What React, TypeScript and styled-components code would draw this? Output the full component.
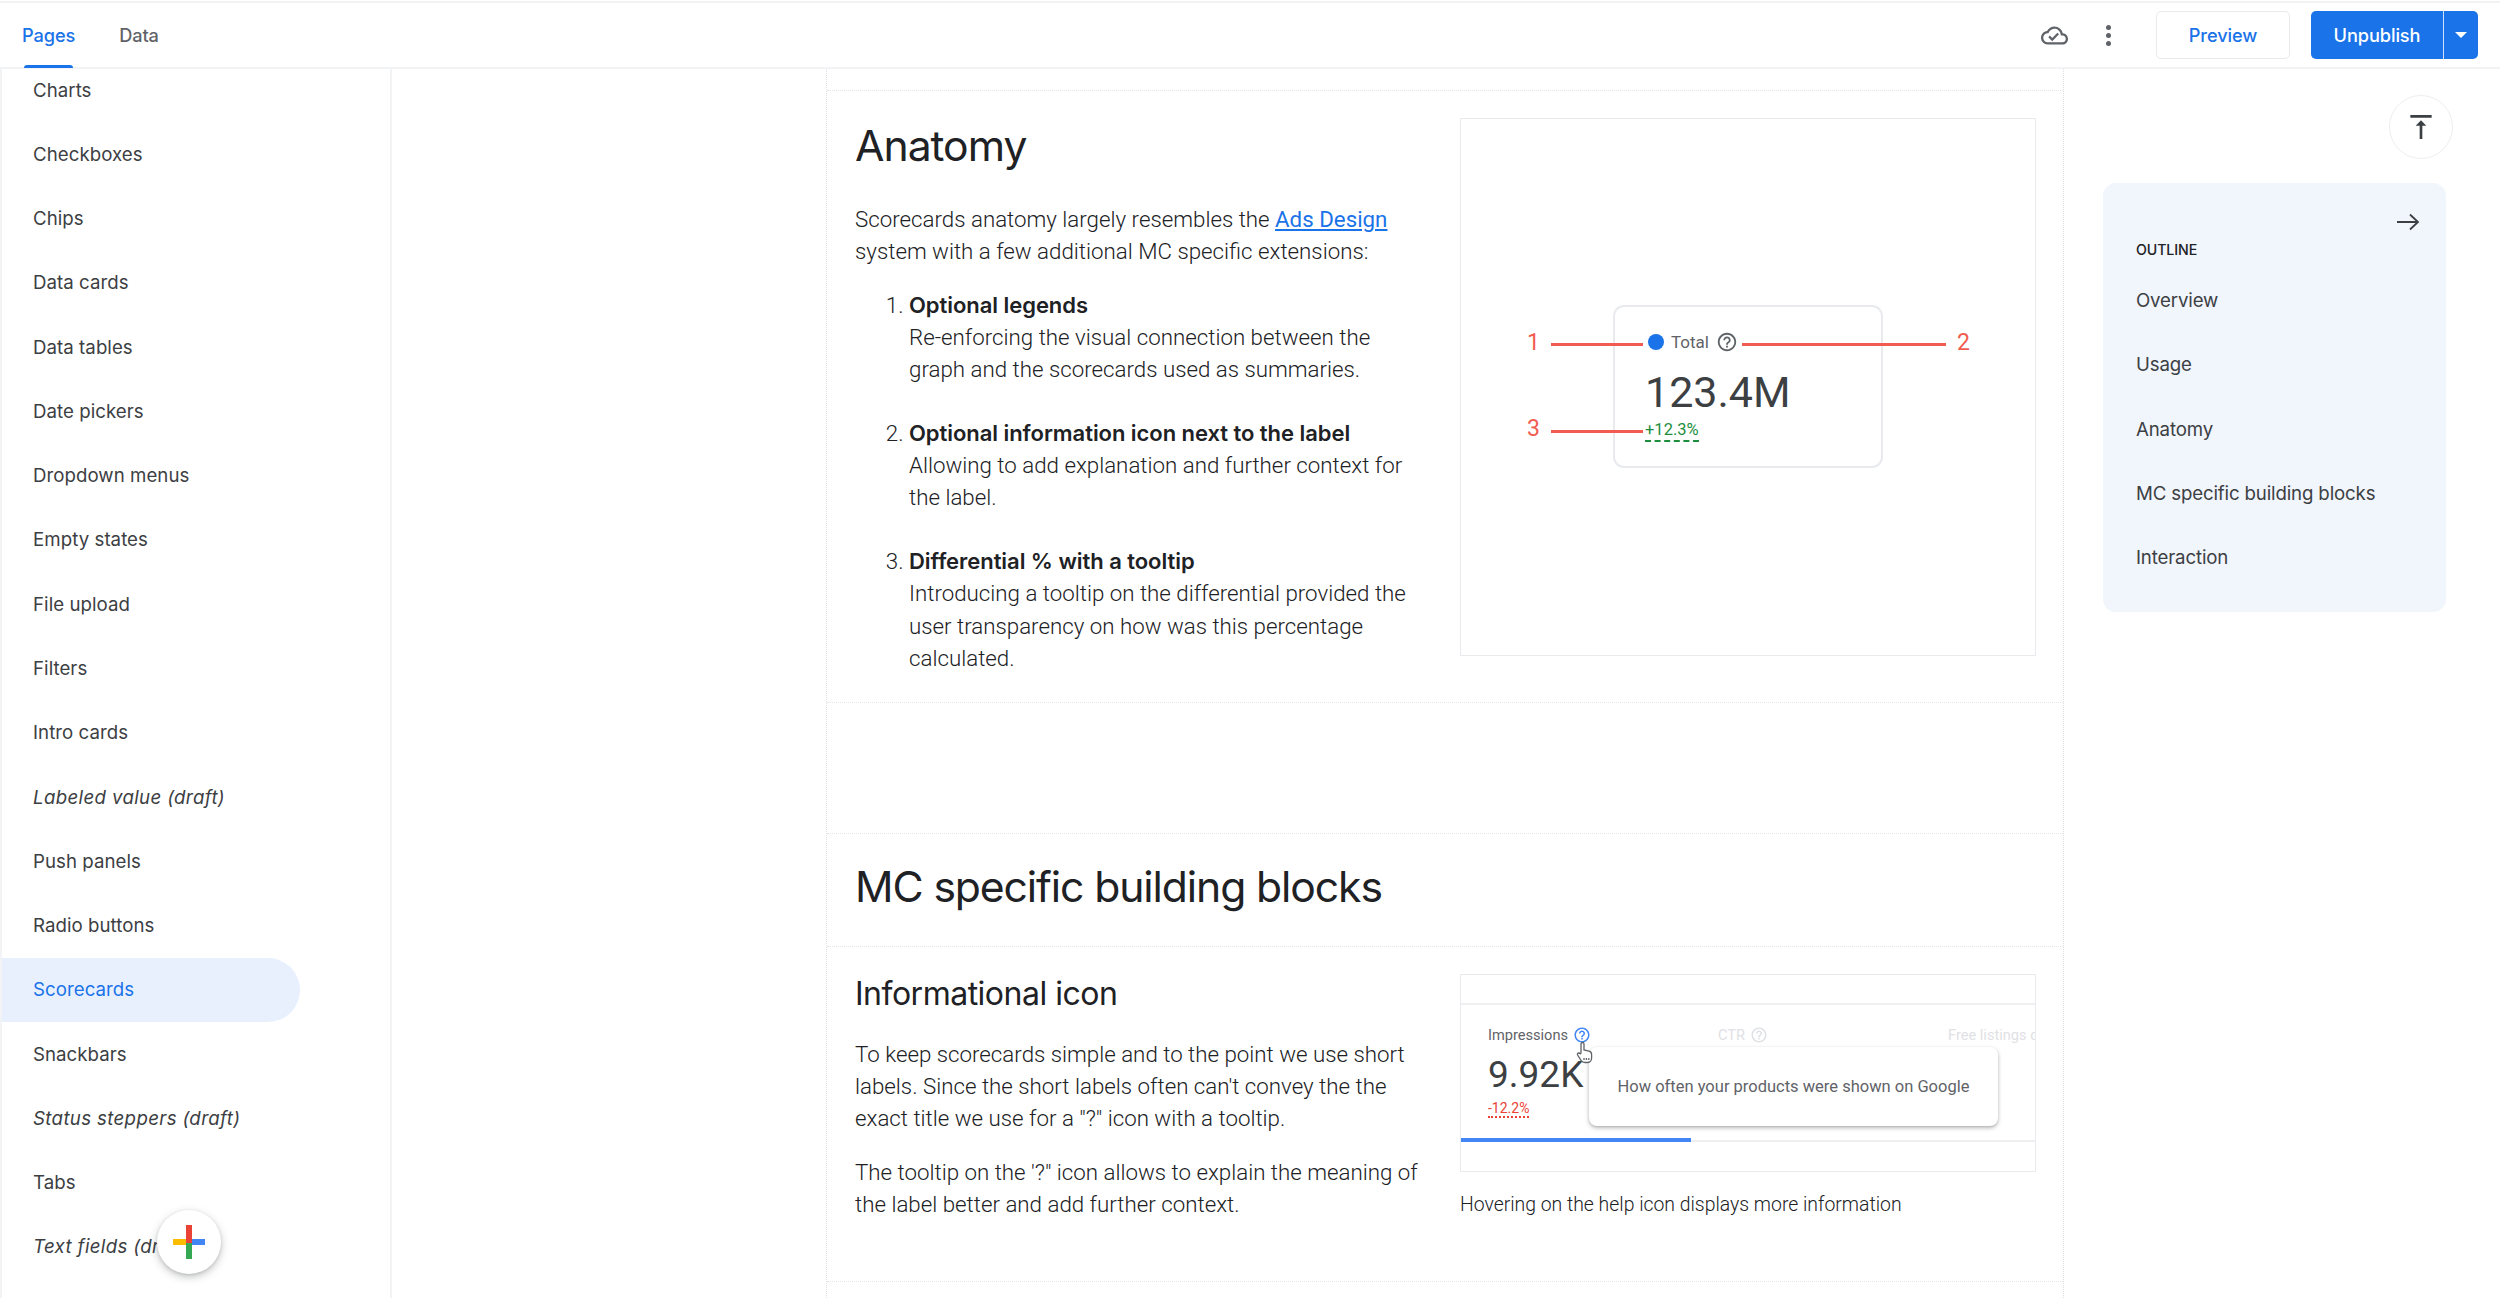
import React from "react";
import styled, { createGlobalStyle } from "styled-components";

const SANS = `"Inter", "Open Sans", sans-serif`;
const BODY = `"Roboto", "Liberation Sans", sans-serif`;

const Global = createGlobalStyle`
  html, body { margin: 0; padding: 0; height: 1298px; overflow: hidden; background: #fff; }
  * { box-sizing: border-box; }
`;

const Page = styled.div`
  height: 1298px;
  display: flex;
  flex-direction: column;
  overflow: hidden;
  background: #fff;
  font-family: ${BODY};
`;

const TopBar = styled.header`
  flex: none;
  height: 67.5px;
  padding-top: 1px;
  display: flex;
  align-items: center;
  border-top: 2px solid #f1f3f4;
  border-bottom: 2px solid #f1f3f4;
  margin-top: 1px;
`;

const Tabs = styled.nav`
  display: flex;
  gap: 44px;
  padding-left: 22px;
  height: 100%;
`;

const Tab = styled.a<{ $active?: boolean }>`
  position: relative;
  display: flex;
  align-items: center;
  font: 500 18.2px ${SANS};
  letter-spacing: -0.1px;
  color: ${(p) => (p.$active ? "#1a73e8" : "#5f6368")};
  ${(p) =>
    p.$active
      ? `&::after { content: ""; position: absolute; left: 2px; right: 2px; bottom: -1px; height: 3px; background: #1a73e8; border-radius: 3px 3px 0 0; }`
      : ""}
`;

const Actions = styled.div`
  margin-left: auto;
  display: flex;
  align-items: center;
  padding-right: 22px;
`;

const IconSlot = styled.span`
  display: flex;
  color: #5f6368;
`;

const MoreSlot = styled(IconSlot)`
  margin-left: 38px;
  margin-right: 45px;
  flex-direction: column;
  gap: 2.6px;
`;

const Dot = styled.i`
  width: 5.4px;
  height: 5.4px;
  border-radius: 50%;
  background: #5f6368;
`;

const PreviewButton = styled.button`
  width: 134px;
  height: 48px;
  background: #fff;
  border: 1.5px solid #e8eaed;
  border-radius: 5px;
  color: #1a73e8;
  font: 500 18.2px ${SANS};
  letter-spacing: -0.1px;
`;

const SplitButton = styled.div`
  display: flex;
  height: 48px;
  margin-left: 21px;
  border-radius: 5px;
  overflow: hidden;
  background: #1a73e8;
`;

const PublishPart = styled.button`
  width: 132px;
  border: 0;
  padding: 0;
  background: transparent;
  color: #fff;
  font: 500 18.2px ${SANS};
  letter-spacing: -0.1px;
`;

const CaretPart = styled.span`
  width: 35px;
  border-left: 1.5px solid #cfe0fa;
  display: flex;
  align-items: center;
  justify-content: center;
  &::after {
    content: "";
    border-left: 6.5px solid transparent;
    border-right: 6.5px solid transparent;
    border-top: 6.5px solid #fff;
  }
`;

const Body = styled.div`
  flex: 1;
  min-height: 0;
  display: flex;
`;

const Sidebar = styled.aside`
  position: relative;
  flex: none;
  width: 392px;
  border-left: 2px solid #f1f3f4;
  border-right: 2px solid #f1f3f4;
  overflow: hidden;
`;

const NavList = styled.ul`
  list-style: none;
  margin: -10.5px 0 0;
  padding: 0;
`;

const NavItem = styled.li<{ $active?: boolean; $draft?: boolean }>`
  height: 64.28px;
  width: 299px;
  margin-left: -1px;
  padding-left: 32px;
  display: flex;
  align-items: center;
  font: 400 18.67px ${SANS};
  font-style: ${(p) => (p.$draft ? "italic" : "normal")};
  letter-spacing: ${(p) => (p.$draft ? "0.35px" : "0.05px")};
  white-space: nowrap;
  color: ${(p) => (p.$active ? "#1a73e8" : "#3c4043")};
  background: ${(p) => (p.$active ? "#e8f0fe" : "transparent")};
  border-radius: 0 33px 33px 0;
`;

const Fab = styled.button`
  position: absolute;
  left: 155px;
  top: 1141px;
  width: 64px;
  height: 64px;
  padding: 0;
  border: 0;
  border-radius: 50%;
  background: #fff;
  box-shadow: 0 3px 8px rgba(60, 64, 67, 0.3), 0 1px 3px rgba(60, 64, 67, 0.15);
  display: flex;
  align-items: center;
  justify-content: center;
`;

const Center = styled.main`
  flex: none;
  width: 1672px;
  padding-left: 434px;
  overflow: hidden;
`;

const Column = styled.div`
  width: 1238px;
  height: 100%;
  padding-top: 21px;
  border-left: 1.5px dotted #dfe1e5;
  border-right: 1.5px dotted #dfe1e5;
`;

const Section = styled.section<{ $height: number }>`
  height: ${(p) => p.$height}px;
  padding: 28px 27px 0 28px;
  border-top: 1.5px dotted #e3e5e8;
  display: flex;
  justify-content: space-between;
`;

const ClosedSection = styled(Section)`
  border-bottom: 1.5px dotted #e3e5e8;
`;

const BlocksSection = styled(ClosedSection)`
  padding-top: 26.5px;
`;

const TitleSection = styled(Section)`
  margin-top: 130px;
  padding-top: 26px;
`;

const Prose = styled.div`
  width: 572px;
  font: 300 22.3px/32.1px ${BODY};
  color: #202124;
`;

const H2 = styled.h2`
  margin: 0 0 30.5px;
  font: 400 42.67px/54px ${SANS};
  letter-spacing: -1px;
  color: #202124;
`;

const H2Wide = styled(H2)`
  margin: 0;
  letter-spacing: -1.1px;
`;

const H3 = styled.h3`
  margin: 0 0 24.5px;
  font: 400 32px/40px ${SANS};
  letter-spacing: -0.5px;
  color: #202124;
`;

const Para = styled.p`
  margin: 0 0 21.5px;
`;

const Link = styled.a`
  color: #1a73e8;
  text-decoration: underline;
  font-weight: 400;
`;

const Steps = styled.ol`
  margin: 22px 0 0;
  padding: 0 0 0 54px;
`;

const Step = styled.li`
  margin-bottom: 31.8px;
  strong {
    display: block;
    font: 600 22px/32.1px ${SANS};
    letter-spacing: -0.05px;
    color: #202124;
  }
`;

const Figure = styled.div`
  position: relative;
  flex: none;
  width: 576px;
  height: 538px;
  margin-top: -1px;
  border: 1.5px solid #e8eaed;
  display: flex;
  align-items: center;
  justify-content: center;
`;

const ScoreCard = styled.div`
  width: 270px;
  height: 163px;
  border: 2px solid #e8eaed;
  border-radius: 11px;
  padding: 24px 0 0 33px;
`;

const LegendRow = styled.div`
  display: flex;
  align-items: center;
  gap: 7px;
  height: 22px;
  font: 400 17px ${BODY};
  color: #5f6368;
`;

const LegendDot = styled.span`
  width: 16px;
  height: 16px;
  border-radius: 50%;
  background: #1a73e8;
`;

const BigValue = styled.div`
  margin: 14px 0 0 -3px;
  font: 400 43px/50px ${BODY};
  color: #3c4043;
`;

const Delta = styled.div<{ $tone: "up" | "down" }>`
  display: inline-block;
  font: 400 ${(p) => (p.$tone === "up" ? "16.5px/20px" : "14px/16px")} ${BODY};
  color: ${(p) => (p.$tone === "up" ? "#1e8e3e" : "#ea4335")};
  border-bottom: 2px ${(p) => (p.$tone === "up" ? "dashed" : "dotted")} currentColor;
`;

const DeltaUp = styled(Delta)`
  margin: 3px 0 0 -3px;
`;

const CalloutLine = styled.span<{ $x: number; $y: number; $w: number }>`
  position: absolute;
  left: ${(p) => p.$x}px;
  top: ${(p) => p.$y}px;
  width: ${(p) => p.$w}px;
  height: 3px;
  background: #f25c50;
`;

const CalloutNum = styled.span<{ $x: number; $y: number }>`
  position: absolute;
  left: ${(p) => p.$x}px;
  top: ${(p) => p.$y}px;
  font: 400 23px/24px ${BODY};
  color: #f25c50;
`;

const FigureColumn = styled.div`
  width: 576px;
  flex: none;
`;

const Shot = styled.div`
  position: relative;
  height: 198px;
  border: 1.5px solid #e8eaed;
  display: flex;
  flex-direction: column;
  overflow: hidden;
`;

const ShotStrip = styled.div`
  flex: 1;
`;

const ShotMiddle = styled.div`
  flex: none;
  height: 139px;
  border-top: 2px solid #eeeff1;
  border-bottom: 2px solid #eeeff1;
  display: flex;
  position: relative;
`;

const Metric = styled.div<{ $first?: boolean }>`
  flex: none;
  width: ${(p) => (p.$first ? "257px" : "230px")};
  padding: 20px 0 0 ${(p) => (p.$first ? "27px" : "0")};
  white-space: nowrap;
`;

const MetricLabel = styled.div<{ $muted?: boolean }>`
  display: flex;
  align-items: center;
  gap: 5px;
  height: 20px;
  font: 400 14.6px ${BODY};
  color: ${(p) => (p.$muted ? "#dfe1e5" : "#5f6368")};
`;

const MetricValue = styled.div`
  margin-top: 8px;
  font: 400 37px/44px ${BODY};
  color: #3c4043;
`;

const DeltaDown = styled(Delta)`
  margin-top: 3px;
`;

const ProgressBar = styled.span`
  position: absolute;
  left: 0;
  bottom: -2px;
  width: 230px;
  height: 4px;
  background: #4285f4;
`;

const Tooltip = styled.div`
  position: absolute;
  left: 128px;
  top: 42px;
  width: 409px;
  height: 79px;
  border-radius: 8px;
  background: #fff;
  box-shadow: 0 2px 4px rgba(60, 64, 67, 0.35), 0 1px 2px rgba(60, 64, 67, 0.12);
  display: flex;
  align-items: center;
  justify-content: center;
  font: 400 16.5px ${BODY};
  color: #5f6368;
`;

const HandCursor = styled.span`
  position: absolute;
  left: 114px;
  top: 36px;
  display: flex;
`;

const Caption = styled.div`
  margin-top: 17px;
  font: 300 19.4px/32px ${BODY};
  color: #202124;
`;

const Rail = styled.aside`
  flex: none;
  width: 436px;
  padding: 26px 0 0 39px;
`;

const TopButton = styled.button`
  display: flex;
  align-items: center;
  justify-content: center;
  width: 64px;
  height: 64px;
  margin-left: 286px;
  padding: 0;
  background: #fff;
  border: 1.5px solid #eceef0;
  border-radius: 50%;
  color: #3c4043;
`;

const Outline = styled.nav`
  width: 343px;
  margin-top: 24px;
  padding: 27px 26px 22px 33px;
  background: #f1f5fc;
  border-radius: 13px;
`;

const OutlineArrowRow = styled.div`
  display: flex;
  justify-content: flex-end;
  height: 24px;
  color: #3c4043;
`;

const OutlineTitle = styled.div`
  margin-top: 6px;
  margin-bottom: 9px;
  font: 500 14.2px/20px ${SANS};
  letter-spacing: -0.1px;
  color: #202124;
`;

const OutlineItem = styled.div`
  height: 64.3px;
  display: flex;
  align-items: center;
  font: 400 18.67px ${SANS};
  letter-spacing: -0.15px;
  white-space: nowrap;
  color: #3c4043;
`;

const Help = ({ size, color }: { size: number; color: string }) => (
  <svg width={size} height={size} viewBox="0 0 24 24" fill={color}>
    <path d="M11 18h2v-2h-2v2zm1-16C6.48 2 2 6.48 2 12s4.48 10 10 10 10-4.48 10-10S17.52 2 12 2zm0 18c-4.41 0-8-3.59-8-8s3.59-8 8-8 8 3.59 8 8-3.59 8-8 8zm0-14c-2.21 0-4 1.79-4 4h2c0-1.1.9-2 2-2s2 .9 2 2c0 2-3 1.75-3 5h2c0-2.25 3-2.5 3-5 0-2.21-1.79-4-4-4z" />
  </svg>
);

const NAV: { label: string; draft?: boolean; active?: boolean }[] = [
  { label: "Charts" },
  { label: "Checkboxes" },
  { label: "Chips" },
  { label: "Data cards" },
  { label: "Data tables" },
  { label: "Date pickers" },
  { label: "Dropdown menus" },
  { label: "Empty states" },
  { label: "File upload" },
  { label: "Filters" },
  { label: "Intro cards" },
  { label: "Labeled value (draft)", draft: true },
  { label: "Push panels" },
  { label: "Radio buttons" },
  { label: "Scorecards", active: true },
  { label: "Snackbars" },
  { label: "Status steppers (draft)", draft: true },
  { label: "Tabs" },
  { label: "Text fields (draft)", draft: true },
];

const OUTLINE = ["Overview", "Usage", "Anatomy", "MC specific building blocks", "Interaction"];

export default function App() {
  return (
    <Page>
      <Global />
      <TopBar>
        <Tabs>
          <Tab $active>Pages</Tab>
          <Tab>Data</Tab>
        </Tabs>
        <Actions>
          <IconSlot>
            <svg width="27" height="27" viewBox="0 0 24 24" fill="currentColor">
              <path d="M19.35 10.04C18.67 6.59 15.64 4 12 4 9.11 4 6.6 5.64 5.35 8.04 2.34 8.36 0 10.91 0 14c0 3.31 2.69 6 6 6h13c2.76 0 5-2.24 5-5 0-2.64-2.05-4.78-4.65-4.96zM19 18H6c-2.21 0-4-1.79-4-4 0-2.05 1.53-3.76 3.56-3.97l1.07-.11.5-.95C8.08 7.14 9.94 6 12 6c2.62 0 4.88 1.86 5.39 4.43l.3 1.5 1.53.11c1.56.1 2.78 1.41 2.78 2.96 0 1.65-1.35 3-3 3zm-9-3.82l-2.09-2.09L6.5 13.5 10 17l6.01-6.01-1.41-1.41z" />
            </svg>
          </IconSlot>
          <MoreSlot>
            <Dot />
            <Dot />
            <Dot />
          </MoreSlot>
          <PreviewButton>Preview</PreviewButton>
          <SplitButton>
            <PublishPart>Unpublish</PublishPart>
            <CaretPart />
          </SplitButton>
        </Actions>
      </TopBar>
      <Body>
        <Sidebar>
          <NavList>
            {NAV.map((n) => (
              <NavItem key={n.label} $active={n.active} $draft={n.draft}>
                {n.label}
              </NavItem>
            ))}
          </NavList>
          <Fab aria-label="Add">
            <svg width="34" height="34" viewBox="0 0 34 34">
              <rect x="1" y="14" width="15" height="6" fill="#fbbc04" />
              <rect x="14" y="0" width="6" height="16" fill="#ea4335" />
              <rect x="18" y="14" width="15" height="6" fill="#4285f4" />
              <rect x="14" y="18" width="6" height="16" fill="#34a853" />
              <rect x="14" y="14" width="6" height="4" fill="#ea4335" />
            </svg>
          </Fab>
        </Sidebar>
        <Center>
          <Column>
            <ClosedSection $height={613.5}>
              <Prose>
                <H2>Anatomy</H2>
                <Para>
                  Scorecards anatomy largely resembles the <Link>Ads Design</Link> system with a few additional MC
                  specific extensions:
                </Para>
                <Steps>
                  <Step>
                    <strong>Optional legends</strong>
                    Re-enforcing the visual connection between the graph and the scorecards used as summaries.
                  </Step>
                  <Step>
                    <strong>Optional information icon next to the label</strong>
                    Allowing to add explanation and further context for the label.
                  </Step>
                  <Step>
                    <strong>Differential % with a tooltip</strong>
                    Introducing a tooltip on the differential provided the user transparency on how was this percentage
                    calculated.
                  </Step>
                </Steps>
              </Prose>
              <Figure>
                <ScoreCard>
                  <LegendRow>
                    <LegendDot />
                    Total
                    <Help size={22} color="#5f6368" />
                  </LegendRow>
                  <BigValue>123.4M</BigValue>
                  <DeltaUp $tone="up">+12.3%</DeltaUp>
                </ScoreCard>
                <CalloutNum $x={66} $y={212}>1</CalloutNum>
                <CalloutLine $x={90} $y={224} $w={92} />
                <CalloutLine $x={281} $y={224} $w={204} />
                <CalloutNum $x={496} $y={212}>2</CalloutNum>
                <CalloutNum $x={66} $y={298}>3</CalloutNum>
                <CalloutLine $x={90} $y={311} $w={92} />
              </Figure>
            </ClosedSection>
            <TitleSection $height={113}>
              <H2Wide>MC specific building blocks</H2Wide>
            </TitleSection>
            <BlocksSection $height={336}>
              <Prose>
                <H3>Informational icon</H3>
                <Para>
                  To keep scorecards simple and to the point we use short labels. Since the short labels often can't
                  convey the the exact title we use for a "?" icon with a tooltip.
                </Para>
                <Para>The tooltip on the '?" icon allows to explain the meaning of the label better and add further context.</Para>
              </Prose>
              <FigureColumn>
                <Shot>
                  <ShotStrip />
                  <ShotMiddle>
                    <Metric $first>
                      <MetricLabel>
                        Impressions
                        <Help size={18} color="#4285f4" />
                      </MetricLabel>
                      <MetricValue>9.92K</MetricValue>
                      <DeltaDown $tone="down">-12.2%</DeltaDown>
                    </Metric>
                    <Metric>
                      <MetricLabel $muted>
                        CTR
                        <Help size={18} color="#dfe1e5" />
                      </MetricLabel>
                    </Metric>
                    <Metric>
                      <MetricLabel $muted>Free listings c</MetricLabel>
                    </Metric>
                    <Tooltip>How often your products were shown on Google</Tooltip>
                    <HandCursor>
                      <svg width="20" height="23" viewBox="0 0 20 23" fill="#fff" stroke="#5f6368" strokeWidth="1.3">
                        <path d="M6 12V3a1.5 1.5 0 0 1 3 0v6l5 1.2c1.6.4 2.6 1.6 2.6 3.2V17c0 2.5-1.8 4.5-4.4 4.5H10c-1.8 0-3-.7-4-2.2L2.6 14c-.6-1 .1-2 1.1-2 .6 0 1.2.3 1.6.8z" />
                        <path d="M9 17v2M11.4 17v2M13.8 17v2" />
                      </svg>
                    </HandCursor>
                    <ProgressBar />
                  </ShotMiddle>
                  <ShotStrip />
                </Shot>
                <Caption>Hovering on the help icon displays more information</Caption>
              </FigureColumn>
            </BlocksSection>
          </Column>
        </Center>
        <Rail>
          <TopButton aria-label="Back to top">
            <svg width="32" height="32" viewBox="0 0 24 24" fill="currentColor">
              <path d="M8 11h3v10h2V11h3l-4-4-4 4zM4 3v2h16V3H4z" />
            </svg>
          </TopButton>
          <Outline>
            <OutlineArrowRow>
              <svg width="24" height="24" viewBox="0 0 24 24" fill="none" stroke="currentColor" strokeWidth="1.8">
                <path d="M1 12h21M14 4.5l8 7.5-8 7.5" />
              </svg>
            </OutlineArrowRow>
            <OutlineTitle>OUTLINE</OutlineTitle>
            {OUTLINE.map((o) => (
              <OutlineItem key={o}>{o}</OutlineItem>
            ))}
          </Outline>
        </Rail>
      </Body>
    </Page>
  );
}
